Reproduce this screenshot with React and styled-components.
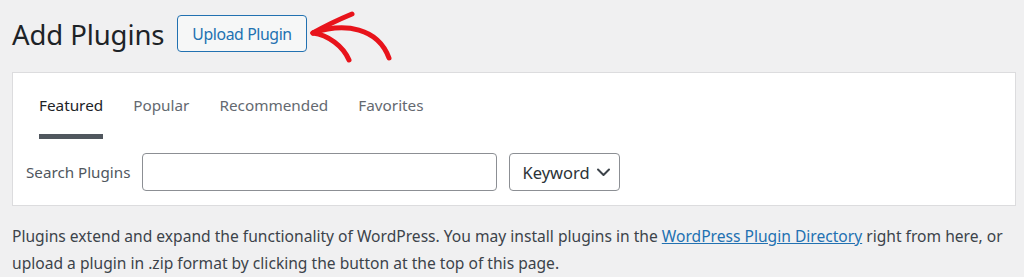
import React from "react";
import styled, { createGlobalStyle } from "styled-components";

const Global = createGlobalStyle`
  html, body {
    margin: 0;
    padding: 0;
    background: #f0f0f1;
    font-family: "Noto Sans", "Open Sans", sans-serif;
    color: #3c434a;
  }
  * { box-sizing: border-box; }
`;

const Page = styled.div`
  position: relative;
  padding: 0 8px 0 12px;
  width: 1024px;
  height: 277px;
  overflow: hidden;
`;

const Header = styled.div`
  display: flex;
  align-items: flex-start;
  gap: 13px;
  padding-top: 15px;
  height: 72px;
`;

const Title = styled.h1`
  margin: 0;
  font-size: 27.5px;
  font-weight: 400;
  letter-spacing: -0.1px;
  color: #1d2327;
  line-height: 37px;
  padding-top: 1px;
`;

const UploadButton = styled.button`
  font-family: "Noto Sans", sans-serif;
  height: 37px;
  padding: 0 14px;
  border: 1px solid #2271b1;
  border-radius: 4px;
  background: #f6f7f7;
  color: #2271b1;
  font-size: 15.8px;
  letter-spacing: -0.4px;
  cursor: pointer;
`;

const Arrow = styled.svg`
  position: absolute;
  left: 300px;
  top: 0;
  pointer-events: none;
`;

const Panel = styled.div`
  background: #fff;
  border: 1px solid #dcdcde;
  padding: 0 0 14px 0;
`;

const TabList = styled.nav`
  display: flex;
  gap: 30px;
  padding: 0 26px;
`;

const Tab = styled.a`
  display: block;
  padding-top: 20px;
  padding-bottom: 17px;
  line-height: 24px;
  font-size: 15.3px;
  color: ${(p) => (p.$active ? "#1d2327" : "#646970")};
  border-bottom: 5px solid ${(p) => (p.$active ? "#50575e" : "transparent")};
  text-decoration: none;
`;

const SearchRow = styled.div`
  display: flex;
  align-items: center;
  gap: 12px;
  padding: 14px 13px 0;
`;

const Label = styled.label`
  font-size: 15.2px;
  color: #50575e;
`;

const Input = styled.input`
  width: 355px;
  height: 38px;
  border: 1px solid #8c8f94;
  border-radius: 4px;
  background: #fff;
`;

const Select = styled.div`
  display: flex;
  align-items: center;
  gap: 6px;
  width: 111px;
  height: 38px;
  padding: 0 0 0 12px;
  border: 1px solid #8c8f94;
  border-radius: 4px;
  font-size: 16.5px;
  color: #2c3338;
  white-space: nowrap;
`;

const Chevron = styled.svg`
  flex-shrink: 0;
`;

const Intro = styled.p`
  margin: 17px 0 0;
  font-size: 15.6px;
  line-height: 27px;
  color: #3c434a;
  white-space: nowrap;
`;

const Link = styled.a`
  color: #2271b1;
  text-decoration: underline;
`;

export default function App() {
  return (
    <>
      <Global />
      <Page>
        <Header>
          <Title>Add Plugins</Title>
          <UploadButton>Upload Plugin</UploadButton>
        </Header>
        <Arrow width="100" height="70" viewBox="300 0 100 70">
          <g fill="none" stroke="#e8131b" strokeWidth="5" strokeLinecap="round" strokeLinejoin="round">
            <path d="M313 33 C 325 26, 340 19, 352 14" />
            <path d="M313 33 C 328 35, 343 46, 349 60" />
            <path d="M313 33 C 345 22, 378 28, 389 58" />
          </g>
        </Arrow>
        <Panel>
          <TabList>
            <Tab $active>Featured</Tab>
            <Tab>Popular</Tab>
            <Tab>Recommended</Tab>
            <Tab>Favorites</Tab>
          </TabList>
          <SearchRow>
            <Label>Search Plugins</Label>
            <Input type="search" />
            <Select>
              Keyword
              <Chevron width="15" height="9" viewBox="0 0 15 9">
                <path d="M2 1.5 L7.5 7 L13 1.5" fill="none" stroke="#3c434a" strokeWidth="2" strokeLinecap="round" strokeLinejoin="round" />
              </Chevron>
            </Select>
          </SearchRow>
        </Panel>
        <Intro>
          Plugins extend and expand the functionality of WordPress. You may install plugins in the{" "}
          <Link>WordPress Plugin Directory</Link> right from here, or
          <br />
          upload a plugin in .zip format by clicking the button at the top of this page.
        </Intro>
      </Page>
    </>
  );
}
